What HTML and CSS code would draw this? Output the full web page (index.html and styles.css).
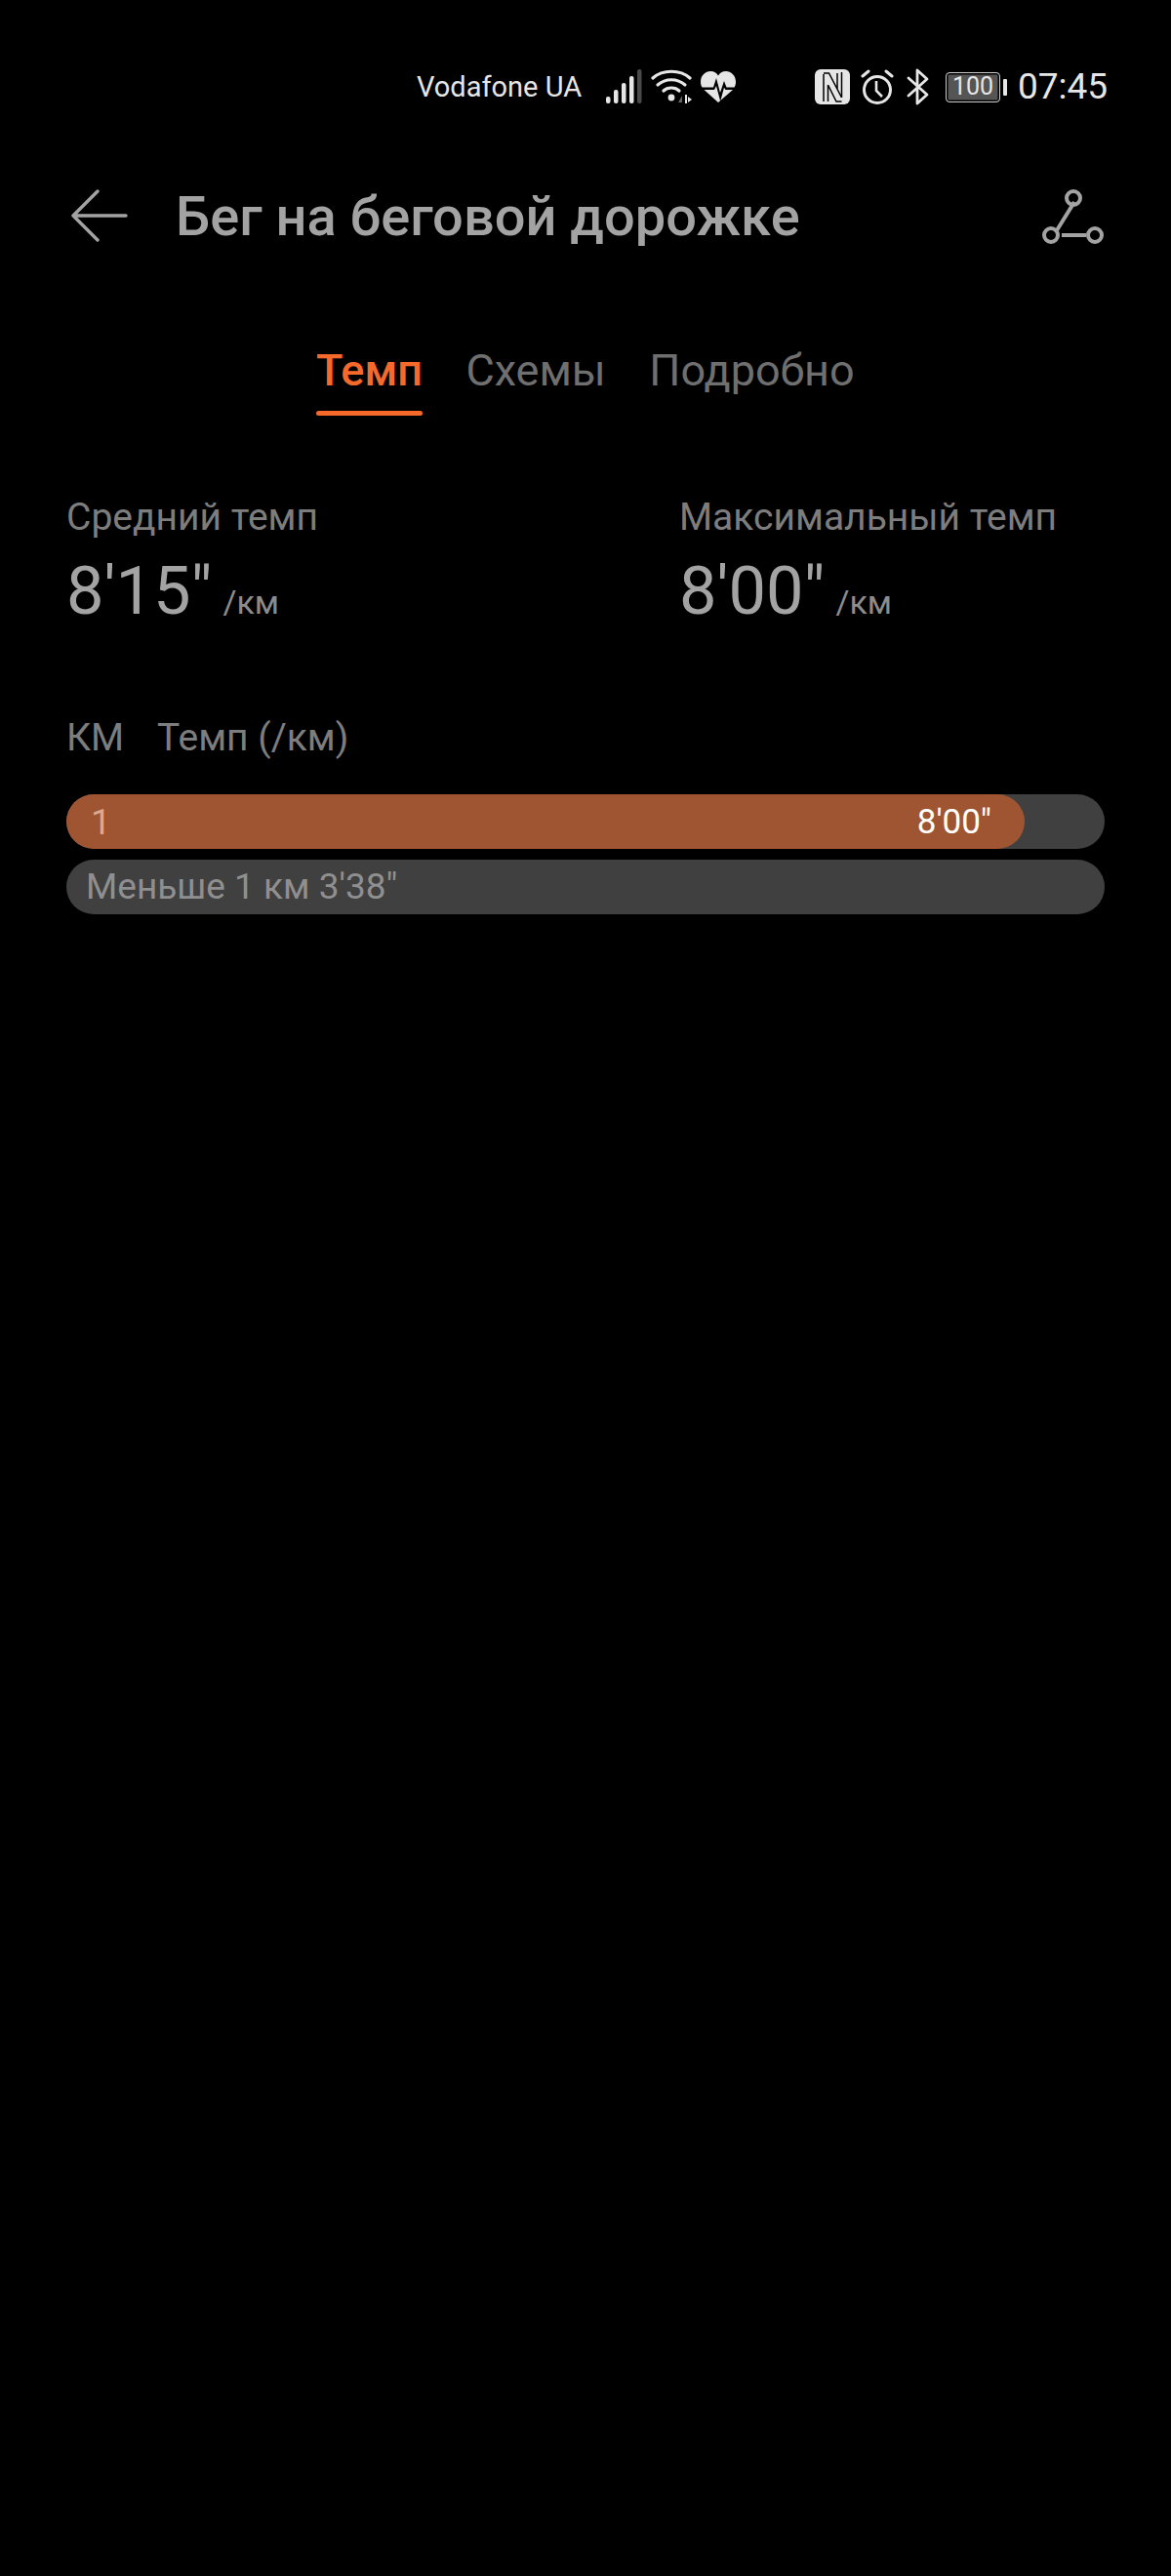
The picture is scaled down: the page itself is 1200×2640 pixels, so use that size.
FILE: index.html
```html
<!DOCTYPE html>
<html lang="ru">
<head>
<meta charset="utf-8">
<title>Темп</title>
<link rel="stylesheet" href="styles.css">
</head>
<body>
<div class="status">
  <span class="carrier">Vodafone UA</span>
  <svg class="ic-signal" width="37" height="36" viewBox="0 0 37 36">
    <rect x="0" y="28" width="4.500" height="7" rx="2" fill="#e6e6e6"/>
    <rect x="8" y="21" width="4.500" height="14" rx="2" fill="#e6e6e6"/>
    <rect x="16" y="14" width="4.500" height="21" rx="2" fill="#e6e6e6"/>
    <rect x="24" y="7" width="4.500" height="28" rx="2" fill="#e6e6e6"/>
    <rect x="32" y="0" width="4.500" height="35" rx="2" fill="#4a4a4a"/>
  </svg>
  <svg class="ic-wifi" width="42" height="36" viewBox="0 0 42 36">
    <path d="M2 9C12 0 30 0 40 9" fill="none" stroke="#e6e6e6" stroke-width="3.200" stroke-linecap="round"/>
    <path d="M7 16C15 9 27 9 35 16" fill="none" stroke="#e6e6e6" stroke-width="3.200" stroke-linecap="round"/>
    <path d="M13 22C17 18 25 18 29 22" fill="none" stroke="#e6e6e6" stroke-width="3.200" stroke-linecap="round"/>
    <circle cx="21" cy="29" r="3.400" fill="#e6e6e6"/>
    <path d="M32 27v7h-4z" fill="#666"/>
    <path d="M35 26h2v9h-2zM38 28l4 3-4 3z" fill="#e6e6e6"/>
  </svg>
  <svg class="ic-heart" width="36" height="32" viewBox="0 0 36 32">
    <path d="M0 11C0 4 5 0 10 0c4 0 6.500 2 8 4.500C19.500 2 22 0 26 0c5 0 10 4 10 11 0 2-.500 4-1.500 5.500H26.500L24 10l-4 12-4-15-3 9.500H1.500C.500 15 0 13 0 11z" fill="#e6e6e6"/>
    <path d="M3.500 19H14l2-4 4 15 .500-.200 3.500-13 1.500 2.200h7.500L18 32z" fill="#e6e6e6"/>
  </svg>
  <span class="status-gap"></span>
  <svg class="ic-nfc" width="36" height="36" viewBox="0 0 36 36">
    <path d="M6 0H30a6 6 0 0 1 6 6V30a6 6 0 0 1-6 6H6a6 6 0 0 1-6-6V6a6 6 0 0 1 6-6z" fill="#e6e6e6"/>
    <path d="M9 5V33M13.500 16V33M9 4H14.500L27.500 29M13.500 16 22 33H27.500M23 4V20M27.500 3V29" fill="none" stroke="#000" stroke-width="1.500"/>
  </svg>
  <svg class="ic-alarm" width="34" height="36" viewBox="0 0 34 36">
    <circle cx="17" cy="21" r="13.500" fill="none" stroke="#e6e6e6" stroke-width="3"/>
    <path d="M16 12v10l6 6" fill="none" stroke="#e6e6e6" stroke-width="2.600"/>
    <path d="M2 7 8 2M32 7 26 2" stroke="#e6e6e6" stroke-width="3" stroke-linecap="round"/>
  </svg>
  <svg class="ic-bt" width="23" height="38" viewBox="0 0 23 38">
    <path d="M2 10 21 27 11 36V2l10 9L2 28" fill="none" stroke="#e6e6e6" stroke-width="2.800" stroke-linecap="round" stroke-linejoin="round"/>
  </svg>
  <span class="battery"><span class="battery-body">100</span><span class="battery-tip"></span></span>
  <span class="clock">07:45</span>
</div>

<header class="topbar">
  <svg class="ic-back" width="58" height="56" viewBox="0 0 58 56">
    <path d="M2 27H56M27 2 2 27l25 25" fill="none" stroke="#a3a3a3" stroke-width="3.400" stroke-linecap="round" stroke-linejoin="round"/>
  </svg>
  <h1 class="title">Бег на беговой дорожке</h1>
  <svg class="ic-share" width="64" height="58" viewBox="0 0 64 58">
    <path d="M33 14 15 43M20 48H45" fill="none" stroke="#a3a3a3" stroke-width="4"/>
    <circle cx="32" cy="10" r="7" fill="none" stroke="#a3a3a3" stroke-width="4"/>
    <circle cx="9" cy="48" r="7" fill="none" stroke="#a3a3a3" stroke-width="4"/>
    <circle cx="54" cy="48" r="7" fill="none" stroke="#a3a3a3" stroke-width="4"/>
  </svg>
</header>

<nav class="tabs">
  <span class="tab tab-active">Темп</span>
  <span class="tab">Схемы</span>
  <span class="tab">Подробно</span>
</nav>

<section class="stats">
  <div class="stat stat-avg">
    <div class="stat-label">Средний темп</div>
    <div class="stat-value">8'15"<span class="stat-unit">/км</span></div>
  </div>
  <div class="stat">
    <div class="stat-label">Максимальный темп</div>
    <div class="stat-value">8'00"<span class="stat-unit">/км</span></div>
  </div>
</section>

<div class="table-head"><span>КМ</span><span>Темп (/км)</span></div>

<div class="bars">
  <div class="bar">
    <div class="bar-fill" style="width:92.3%"><span class="bar-num">1</span><span class="bar-val">8'00"</span></div>
  </div>
  <div class="bar bar-note">Меньше 1 км 3'38"</div>
</div>
</body>
</html>
```

FILE: styles.css
```css
* { box-sizing: border-box; }
html, body { margin: 0; padding: 0; }
body {
  width: 1200px;
  height: 2640px;
  background: #000;
  font-family: Roboto, "Noto Sans", sans-serif;
  overflow: hidden;
}
.status {
  display: flex;
  align-items: center;
  height: 36px;
  margin-top: 71px;
  padding-left: 427px;
  color: #e6e6e6;
}
.carrier { font-size: 29px; width: 194px; white-space: nowrap; }
.ic-wifi { margin-left: 9px; }
.ic-heart { margin-left: 9px; }
.status-gap { width: 81px; }
.ic-alarm { margin-left: 11px; }
.ic-bt { margin-left: 13px; }
.battery { display: flex; align-items: center; margin-left: 17px; }
.battery-body {
  width: 56px;
  height: 31px;
  border: 1.500px solid #ccc;
  border-radius: 4px;
  background: #555;
  box-shadow: inset 0 0 0 1.500px #000;
  font-size: 25px;
  line-height: 28px;
  text-align: center;
  color: #e6e6e6;
}
.battery-tip { width: 4px; height: 17px; margin-left: 3px; background: #e6e6e6; border-radius: 1px; }
.clock { font-size: 37px; margin-left: 11px; line-height: 36px; }

.topbar {
  display: flex;
  align-items: center;
  height: 60px;
  margin-top: 85px;
  padding-left: 73px;
}
.title {
  margin: 0 0 0 49px;
  font-size: 56px;
  font-weight: 500;
  color: #a3a3a3;
  white-space: nowrap;
  width: 888px;
}
.tabs {
  display: flex;
  gap: 44.500px;
  margin-top: 96px;
  padding-left: 324px;
}
.tab {
  font-size: 45px;
  line-height: 64px;
  color: #6f6f6f;
}
.tab-active {
  color: #f5692b;
  font-weight: 500;
}
.tab-active::after {
  content: "";
  display: block;
  height: 5px;
  margin-top: 9px;
  border-radius: 3px;
  background: #f5692b;
}
.stats { display: flex; margin-top: 80px; padding-left: 68px; }
.stat-avg { width: 628px; }
.stat-label { font-size: 39px; line-height: 48px; color: #7d7d7d; }
.stat-value { font-size: 68.500px; line-height: 104px; color: #a3a3a3; }
.stat-unit { font-size: 34px; margin-left: 11px; color: #8c8c8c; }
.table-head {
  display: flex;
  gap: 34px;
  margin-top: 63px;
  padding-left: 68px;
  font-size: 39px;
  line-height: 48px;
  color: #7d7d7d;
}
.bars {
  display: flex;
  flex-direction: column;
  gap: 11px;
  margin: 34px 68px 0;
}
.bar {
  height: 56px;
  border-radius: 28px;
  background: #404040;
}
.bar-fill {
  display: flex;
  justify-content: space-between;
  align-items: center;
  height: 56px;
  padding: 0 34px 0 25px;
  border-radius: 28px;
  background: #a05532;
  font-size: 37px;
}
.bar-num { color: #dca88e; }
.bar-val { color: #fff; font-size: 35px; }
.bar-note {
  padding-left: 20px;
  font-size: 37px;
  line-height: 56px;
  color: #8f8f8f;
}
```
